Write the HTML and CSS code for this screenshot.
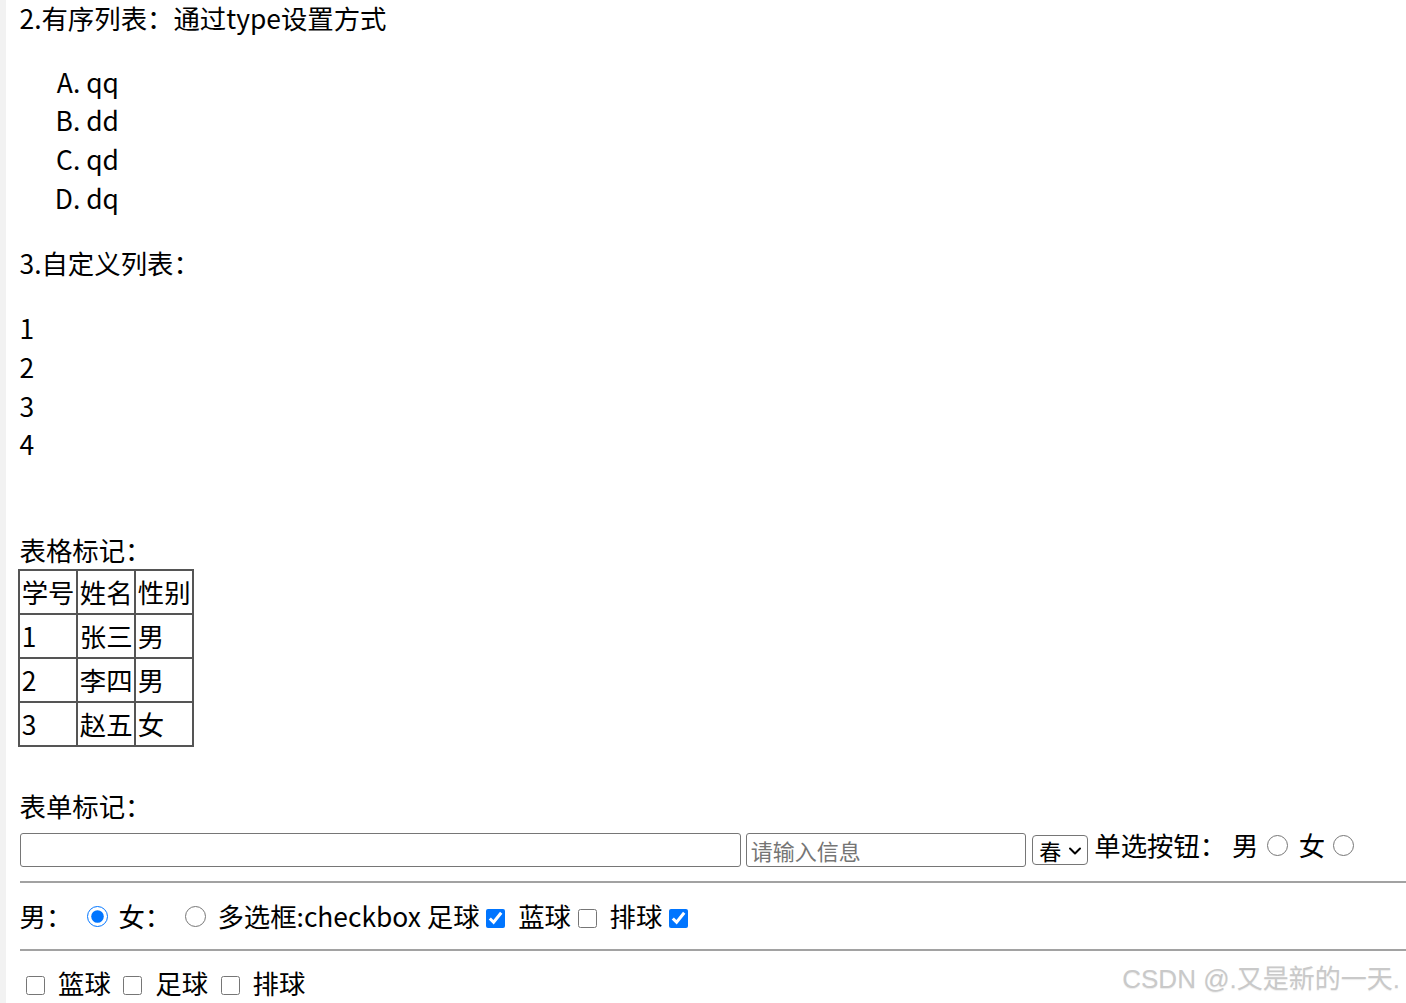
FILE: index.html
```html
<!DOCTYPE html>
<html lang="zh-CN">
<head>
<meta charset="utf-8">
<title>列表与表单</title>
<link rel="stylesheet" href="styles.css">
</head>
<body>
<div class="page">
  <p class="para title">2.有序列表：通过type设置方式</p>
  <ol class="alpha" type="A">
    <li>qq</li>
    <li>dd</li>
    <li>qd</li>
    <li>dq</li>
  </ol>
  <p class="para">3.自定义列表：</p>
  <dl class="deflist">
    <dt>1</dt>
    <dt>2</dt>
    <dt>3</dt>
    <dt>4</dt>
  </dl>
  <div class="blank blank-a"></div>
  <div class="label">表格标记：</div>
  <table class="grid">
    <tr><td>学号</td><td>姓名</td><td>性别</td></tr>
    <tr><td>1</td><td>张三</td><td>男</td></tr>
    <tr><td>2</td><td>李四</td><td>男</td></tr>
    <tr><td>3</td><td>赵五</td><td>女</td></tr>
  </table>
  <div class="blank blank-b"></div>
  <div class="label">表单标记：</div>
  <form class="form">
    <div class="row row-first"><input class="txt wide" type="text"> <input class="txt mid" type="text" placeholder="请输入信息"> <span class="sel-wrap"><select class="sel"><option>春</option><option>夏</option></select><svg class="sel-arrow" width="14" height="10" viewBox="0 0 14 10" aria-hidden="true"><path d="M2 2.5 L7 7.5 L12 2.5" fill="none" stroke="#000" stroke-width="2" stroke-linecap="round" stroke-linejoin="round"/></svg></span> 单选按钮：&nbsp;男<input class="rad" type="radio" name="sex1"> 女<input class="rad" type="radio" name="sex1"></div>
    <hr class="rule">
    <div class="row">男： <input class="rad" type="radio" name="sex2" checked> 女： <input class="rad" type="radio" name="sex2"> 多选框:checkbox 足球<input class="chk" type="checkbox" checked> 蓝球<input class="chk" type="checkbox"> 排球<input class="chk" type="checkbox" checked></div>
    <hr class="rule">
    <div class="row"><input class="chk" type="checkbox"> 篮球 <input class="chk" type="checkbox"> 足球 <input class="chk" type="checkbox"> 排球</div>
  </form>
  <div class="watermark">CSDN @.又是新的一天.</div>
</div>
</body>
</html>
```
FILE: styles.css
```css
html, body {
  margin: 0;
  padding: 0;
  background: #ffffff;
  overflow: hidden;
}

body {
  font-family: "Noto Sans CJK SC", "Noto Sans", sans-serif;
  font-size: 26.4px;
  line-height: 38.67px;
  color: #000000;
}

.page {
  position: relative;
  box-sizing: border-box;
  min-height: 1003px;
  border-left: 6px solid #f2f2f2;
  padding-left: 13.5px;
}

.para {
  margin: 26.67px 0;
}

.title {
  margin-top: 0;
  line-height: 36px;
}

.alpha {
  margin: 26.67px 0;
  padding-left: 66.67px;
  list-style-type: upper-alpha;
}

.deflist {
  margin: 26.67px 0;
}

.deflist dt {
  margin: 0;
}

.blank {
  height: 38.67px;
}

.blank-a {
  height: 40.67px;
}

.blank-b {
  height: 40px;
}

.grid {
  border-collapse: collapse;
  border: 2px solid #555555;
  margin-left: -1.5px;
  margin-top: -1px;
}

.grid td {
  border: 2px solid #555555;
  padding: 1.67px;
  text-align: left;
  vertical-align: middle;
}

.form {
  margin: 0;
}

.row {
  white-space: nowrap;
}

.row-first {
  height: 42.3px;
}

.txt {
  box-sizing: border-box;
  height: 34px;
  margin: 0;
  border: 1.67px solid #767676;
  border-radius: 3px;
  padding: 1.67px 3.33px;
  font-family: "Noto Sans CJK SC", "Noto Sans", sans-serif;
  font-size: 22px;
  background: #ffffff;
  vertical-align: -4px;
}

.txt::placeholder {
  color: #757575;
}

.wide {
  width: 721px;
}

.mid {
  width: 280px;
}

.sel-wrap {
  position: relative;
  display: inline-block;
  vertical-align: -4px;
}

.sel {
  appearance: none;
  -webkit-appearance: none;
  box-sizing: border-box;
  display: block;
  width: 56px;
  height: 30px;
  margin: 0;
  border: 1.67px solid #767676;
  border-radius: 4px;
  padding: 0 0 0 6px;
  font-family: "Noto Sans CJK SC", "Noto Sans", sans-serif;
  font-size: 22px;
  line-height: 26px;
  background: #ffffff;
  color: #000000;
}

.sel-arrow {
  position: absolute;
  right: 6px;
  top: 11px;
  pointer-events: none;
}

.rad {
  width: 21px;
  height: 21px;
  margin: 5px 5px 0 8.33px;
}

.chk {
  width: 19px;
  height: 19px;
  margin: 5px 7px 5px 6.67px;
  vertical-align: -1.5px;
}

.rule {
  margin: 13.33px 0;
  height: 0;
  border: 0;
  border-top: 2px solid #a2a2a2;
}

.watermark {
  position: absolute;
  right: 6px;
  bottom: 6px;
  font-family: "Liberation Sans", "Noto Sans CJK SC", sans-serif;
  font-size: 26px;
  line-height: 36px;
  color: #c9c9c9;
  text-shadow: 0 1px 1px rgba(0, 0, 0, 0.08);
  white-space: nowrap;
}
```
